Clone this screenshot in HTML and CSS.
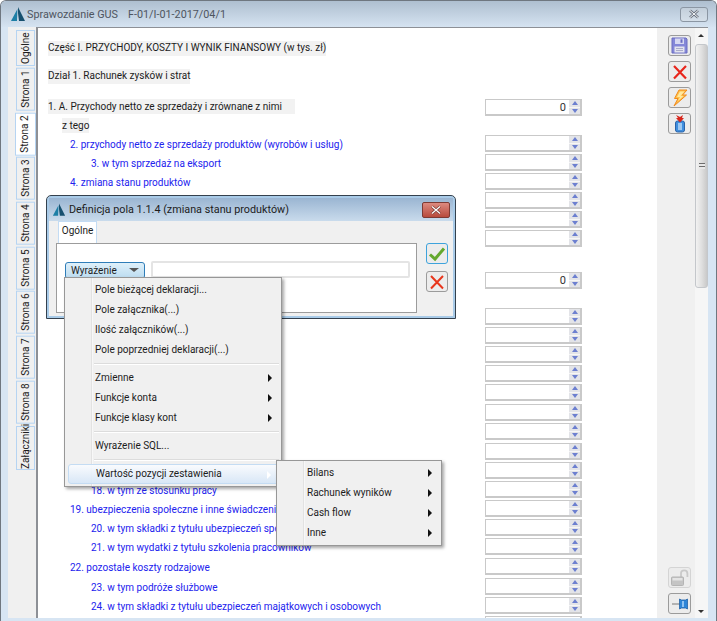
FILE: index.html
```html
<!DOCTYPE html>
<html>
<head>
  <title>Sprawozdanie GUS</title>
  <link rel="stylesheet" href="styles.css">
</head>
<body>
<div class="window">
  <div class="titlebar">
    <svg class="logo" width="16" height="14" viewBox="0 0 16 14"><path d="M8 0 L15 14 L9 14 L8 6 Z" fill="#17506f"/><path d="M7.4 2 L7 14 L1 14 Z" fill="#1d7fa6"/></svg>
    <span class="title">Sprawozdanie GUS</span>
    <span class="title doc">F-01/I-01-2017/04/1</span>
    <button class="close" type="button"><svg width="12" height="10" viewBox="0 0 12 10"><path d="M2 1.5 L10 8.5 M10 1.5 L2 8.5" stroke="#6d7480" stroke-width="2.6"/><path d="M2 1.5 L10 8.5 M10 1.5 L2 8.5" stroke="#f4f6f8" stroke-width="1"/></svg></button>
  </div>
  <div class="content">
    <div class="tabs">
      <div class="tab tab-short">Ogólne</div>
      <div class="tab">Strona 1</div>
      <div class="tab tab-active">Strona 2</div>
      <div class="tab">Strona 3</div>
      <div class="tab">Strona 4</div>
      <div class="tab">Strona 5</div>
      <div class="tab">Strona 6</div>
      <div class="tab">Strona 7</div>
      <div class="tab">Strona 8</div>
      <div class="tab tab-last">Załączniki</div>
    </div>
    <div class="main">
      <div class="head head-first">Część I. PRZYCHODY, KOSZTY I WYNIK FINANSOWY (w tys. zł)</div>
      <div class="head head-second">Dział 1. Rachunek zysków i strat</div>

      <div class="row">
        <span class="label lv0 boxed boxed-wide">1. A. Przychody netto ze sprzedaży i zrównane z nimi</span>
        <div class="num"><span class="val">0</span><span class="spin"><i class="up"></i><i class="down"></i></span></div>
      </div>
      <div class="row-text"><span class="label boxed ztego">z tego</span></div>

      <div class="row"><span class="label lv1">2. przychody netto ze sprzedaży produktów (wyrobów i usług)</span><div class="num"><span class="spin"><i class="up"></i><i class="down"></i></span></div></div>
      <div class="row"><span class="label lv2">3. w tym sprzedaż na eksport</span><div class="num"><span class="spin"><i class="up"></i><i class="down"></i></span></div></div>
      <div class="row"><span class="label lv1">4. zmiana stanu produktów</span><div class="num"><span class="spin"><i class="up"></i><i class="down"></i></span></div></div>
      <div class="row"><span class="label"></span><div class="num"><span class="spin"><i class="up"></i><i class="down"></i></span></div></div>
      <div class="row"><span class="label"></span><div class="num"><span class="spin"><i class="up"></i><i class="down"></i></span></div></div>
      <div class="row gap-a"><span class="label"></span><div class="num"><span class="spin"><i class="up"></i><i class="down"></i></span></div></div>
      <div class="row gap-b"><span class="label"></span><div class="num"><span class="val">0</span><span class="spin"><i class="up"></i><i class="down"></i></span></div></div>

      <div class="row"><span class="label"></span><div class="num"><span class="spin"><i class="up"></i><i class="down"></i></span></div></div>
      <div class="row"><span class="label"></span><div class="num"><span class="spin"><i class="up"></i><i class="down"></i></span></div></div>
      <div class="row"><span class="label"></span><div class="num"><span class="spin"><i class="up"></i><i class="down"></i></span></div></div>
      <div class="row"><span class="label"></span><div class="num"><span class="spin"><i class="up"></i><i class="down"></i></span></div></div>
      <div class="row tall"><span class="label"></span><div class="num"><span class="spin"><i class="up"></i><i class="down"></i></span></div></div>
      <div class="row"><span class="label"></span><div class="num"><span class="spin"><i class="up"></i><i class="down"></i></span></div></div>
      <div class="row tall"><span class="label"></span><div class="num"><span class="spin"><i class="up"></i><i class="down"></i></span></div></div>
      <div class="row"><span class="label"></span><div class="num"><span class="spin"><i class="up"></i><i class="down"></i></span></div></div>
      <div class="row"><span class="label"></span><div class="num"><span class="spin"><i class="up"></i><i class="down"></i></span></div></div>
      <div class="row"><span class="label lv2">18. w tym ze stosunku pracy</span><div class="num"><span class="spin"><i class="up"></i><i class="down"></i></span></div></div>
      <div class="row"><span class="label lv1">19. ubezpieczenia społeczne i inne świadczenia</span><div class="num"><span class="spin"><i class="up"></i><i class="down"></i></span></div></div>
      <div class="row"><span class="label lv2">20. w tym składki z tytułu ubezpieczeń spo</span><div class="num"><span class="spin"><i class="up"></i><i class="down"></i></span></div></div>
      <div class="row tall"><span class="label lv2">21. w tym wydatki z tytułu szkolenia pracowników</span><div class="num"><span class="spin"><i class="up"></i><i class="down"></i></span></div></div>
      <div class="row tall"><span class="label lv1">22. pozostałe koszty rodzajowe</span><div class="num"><span class="spin"><i class="up"></i><i class="down"></i></span></div></div>
      <div class="row"><span class="label lv2">23. w tym podróże służbowe</span><div class="num"><span class="spin"><i class="up"></i><i class="down"></i></span></div></div>
      <div class="row"><span class="label lv2">24. w tym składki z tytułu ubezpieczeń majątkowych i osobowych</span><div class="num"><span class="spin"><i class="up"></i><i class="down"></i></span></div></div>
      <div class="row"><span class="label"></span><div class="num"></div></div>
    </div>
    <div class="side">
      <div class="tools">
        <button class="tool" type="button"><svg width="17" height="17" viewBox="0 0 17 17"><path d="M1 1 H15 L16 2 V16 H1 Z" fill="#8487d8" stroke="#6a6cc0"/><rect x="4" y="1.5" width="9" height="5.5" fill="#d6d8f2"/><rect x="9.5" y="2.3" width="2" height="3.5" fill="#6a6cc0"/><rect x="3.5" y="9.5" width="10" height="6" fill="#e3e4ee"/><path d="M5 11.5 H12 M5 13.5 H12" stroke="#a9abc9"/></svg></button>
        <button class="tool" type="button"><svg width="16" height="16" viewBox="0 0 16 16"><path d="M2 2 L14 14.5 M14 2 L2 14.5" stroke="#e8261c" stroke-width="2.2"/></svg></button>
        <button class="tool" type="button"><svg width="18" height="18" viewBox="0 0 18 18"><path d="M8 1 H16 L11.5 6 H15.5 L3 17 L7 9.5 H3.5 Z" fill="#ffc04a" stroke="#f08a1c"/><path d="M9 2.5 H13.5 L9.5 7 H12.5 L7 12 L9 8 H6 Z" fill="#ffe9a0"/></svg></button>
        <button class="tool" type="button"><svg width="14" height="19" viewBox="0 0 14 19"><rect x="2.5" y="7" width="9" height="11" rx="2" fill="#3f8ede" stroke="#2b63a8"/><rect x="5" y="9" width="4" height="7" fill="#9cc8f2"/><path d="M3 1 L7 3 L10 1 L9 4 H11 L7 8.5 L3 4 H5 Z" fill="#d8261c"/></svg></button>
      </div>
      <div class="tools tools-bottom">
        <button class="tool tool-off" type="button"><svg width="19" height="18" viewBox="0 0 19 18"><path d="M11 8 V4.5 A3.2 3.2 0 0 1 17.4 4.5 V8" fill="none" stroke="#c9c9c9" stroke-width="1.8"/><rect x="1.5" y="8" width="12" height="8.5" rx="1" fill="#c4c4c4" stroke="#b4b4b4"/><rect x="2.5" y="9" width="10" height="2.5" fill="#e4e4e4"/></svg></button>
        <button class="tool" type="button"><svg width="18" height="14" viewBox="0 0 18 14"><path d="M1 7 H9" stroke="#9a9a9a" stroke-width="1.4"/><path d="M8.5 2 L10.5 3 H14.5 L16.5 2 V12 L14.5 11 H10.5 L8.5 12 Z" fill="#2f86d8" stroke="#2263a8" stroke-width="0.8"/><rect x="11" y="4" width="2" height="6" fill="#8fc3f2"/></svg></button>
      </div>
      <div class="scrollbar">
        <i class="sb-up"></i>
        <div class="thumb"><span class="grip"></span></div>
        <i class="sb-down"></i>
      </div>
    </div>
  </div>

  <div class="dialog">
    <div class="dlg-title">
      <svg class="dlg-logo" width="14" height="13" viewBox="0 0 16 14"><path d="M8 0 L15 14 L9 14 L8 6 Z" fill="#17506f"/><path d="M7.4 2 L7 14 L1 14 Z" fill="#1d7fa6"/></svg>
      <span class="dlg-name">Definicja pola 1.1.4 (zmiana stanu produktów)</span>
      <button class="dlg-close" type="button"><svg width="12" height="10" viewBox="0 0 12 10"><path d="M2 1.5 L10 8.5 M10 1.5 L2 8.5" stroke="#7a3a34" stroke-width="2.6"/><path d="M2 1.5 L10 8.5 M10 1.5 L2 8.5" stroke="#fff" stroke-width="1.2"/></svg></button>
    </div>
    <div class="dlg-body">
      <div class="dlg-left">
        <div class="dlg-tab">Ogólne</div>
        <div class="dlg-panel">
          <div class="combo">Wyrażenie<i class="combo-arrow"></i></div>
          <div class="dlg-input"></div>
        </div>
      </div>
      <div class="dlg-actions">
        <button class="dlg-btn dlg-ok" type="button"><svg width="18" height="16" viewBox="0 0 18 16"><path d="M2 8.5 L7 13 L16 2.5" fill="none" stroke="#64a82e" stroke-width="3"/></svg></button>
        <button class="dlg-btn" type="button"><svg width="16" height="16" viewBox="0 0 16 16"><path d="M2 2 L14 14.5 M14 2 L2 14.5" stroke="#e8361c" stroke-width="2"/></svg></button>
      </div>
    </div>
  </div>

  <div class="menu menu-main">
    <div class="mi">Pole bieżącej deklaracji...</div>
    <div class="mi">Pole załącznika(...)</div>
    <div class="mi">Ilość załączników(...)</div>
    <div class="mi">Pole poprzedniej deklaracji(...)</div>
    <div class="msep"></div>
    <div class="mi more">Zmienne</div>
    <div class="mi more">Funkcje konta</div>
    <div class="mi more">Funkcje klasy kont</div>
    <div class="msep"></div>
    <div class="mi">Wyrażenie SQL...</div>
    <div class="msep"></div>
    <div class="mi more hot">Wartość pozycji zestawienia</div>
  </div>
  <div class="menu menu-sub">
    <div class="mi more">Bilans</div>
    <div class="mi more">Rachunek wyników</div>
    <div class="mi more">Cash flow</div>
    <div class="mi more">Inne</div>
  </div>
</div>
</body>
</html>
```

FILE: styles.css
```css
html, body {
  margin: 0;
  height: 100%;
  overflow: hidden;
  background: #fff;
}
body {
  font-family: Roboto, "Noto Sans", sans-serif;
  font-size: 10px;
  color: #1c1c1c;
}
button {
  padding: 0;
  font: inherit;
}

/* outer window */
.window {
  position: relative;
  width: 717px;
  height: 621px;
  box-sizing: border-box;
  display: flex;
  flex-direction: column;
  border: 1px solid #6f7780;
  border-bottom: 0;
  border-radius: 6px 6px 0 0;
  background: #d7e5f3;
  overflow: hidden;
}
.titlebar {
  height: 26px;
  flex: none;
  display: flex;
  align-items: center;
  padding: 0 8px 0 8px;
  background: linear-gradient(#aebfd0, #d5e3f1);
  box-sizing: border-box;
}
.logo {
  margin: 0 1px 0 1px;
}
.title {
  font-size: 10.8px;
  color: #4e5560;
}
.doc {
  margin-left: 10px;
}
.close {
  margin-left: auto;
  width: 28px;
  height: 15px;
  display: flex;
  align-items: center;
  justify-content: center;
  border: 1px solid #8b96a3;
  border-radius: 3px;
  background: linear-gradient(#c3cfdb, #d5dfe9);
}
.content {
  flex: 1;
  min-height: 0;
  display: flex;
  margin: 0 8px 3px 7px;
  background: #f0f0f0;
}

/* page tabs on the left */
.tabs {
  width: 28px;
  flex: none;
  box-sizing: border-box;
  padding: 3px 0 0 8px;
  display: flex;
  flex-direction: column;
  gap: 2px;
}
.tab {
  width: 19px;
  height: 42.7px;
  flex: none;
  box-sizing: border-box;
  writing-mode: vertical-rl;
  transform: rotate(180deg);
  text-align: center;
  line-height: 17px;
  border: 1px solid #b6d4f2;
  background: #f0f0f0;
  color: #1c1c1c;
  white-space: nowrap;
}
.tab-short {
  height: 36px;
}
.tab-active {
  width: 21px;
  margin-left: -1px;
  background: #fff;
}
.tab-last {
  height: 44px;
}

/* main scrolling sheet */
.main {
  flex: 1;
  min-width: 0;
  background: #fff;
  border-left: 2px solid #8d9096;
  border-top: 1px solid #8d9096;
  padding-top: 13px;
  overflow: hidden;
  color: #2222ee;
}
.head {
  width: max-content;
  margin-left: 10px;
  height: 15px;
  line-height: 14px;
  background: #f2f2f2;
  color: #1c1c1c;
}
.head-first {
  margin-bottom: 13px;
}
.head-second {
  margin-bottom: 15px;
}
.row {
  height: 19px;
  display: flex;
  flex: none;
}
.tall {
  height: 20px;
}
.gap-a {
  margin-bottom: 23px;
}
.gap-b {
  margin-bottom: 17px;
}
.row-text {
  height: 17px;
}
.label {
  width: 447px;
  flex: none;
  box-sizing: border-box;
  padding-top: 2px;
  line-height: 16px;
  white-space: nowrap;
}
.lv0 {
  margin-left: 10px;
  width: 247px;
}
.lv1 {
  padding-left: 32px;
}
.lv2 {
  padding-left: 53px;
}
.boxed {
  background: #f2f2f2;
  color: #1c1c1c;
  height: 15px;
  padding-top: 0;
}
.boxed-wide {
  margin-right: 190px;
}
.ztego {
  display: block;
  width: 27px;
  margin-left: 24px;
}
.num {
  width: 97px;
  height: 17px;
  flex: none;
  box-sizing: border-box;
  border: 2px solid #c9c9c9;
  border-width: 1px 2px 2px 1px;
  display: flex;
  justify-content: flex-end;
  align-items: center;
  background: #fff;
  font-size: 11px;
  color: #333;
}
.val {
  margin-right: 3px;
}
.spin {
  width: 11px;
  height: 14px;
  display: flex;
  flex-direction: column;
  flex: none;
  background: #e3e4e8;
}
.spin i {
  flex: 1;
  display: flex;
  align-items: center;
  justify-content: center;
}
.spin i::after {
  content: "";
  border-left: 3px solid transparent;
  border-right: 3px solid transparent;
}
.up::after {
  border-bottom: 4px solid #6c7fd0;
}
.down {
  border-top: 1px solid #f6f6f6;
}
.down::after {
  border-top: 4px solid #6c7fd0;
}

/* right side toolbar and scrollbar */
.side {
  width: 51px;
  flex: none;
  position: relative;
  box-sizing: border-box;
  border-top: 1px solid #8d9096;
  padding: 7px 0 4px 11px;
  display: flex;
  flex-direction: column;
  justify-content: space-between;
}
.tools {
  display: flex;
  flex-direction: column;
  gap: 5px;
  width: 23px;
}
.tools-bottom {
  gap: 5px;
}
.tool {
  width: 23px;
  height: 21px;
  box-sizing: border-box;
  border: 1.5px solid #9b9b9b;
  border-radius: 3px;
  background: #ececec;
  display: flex;
  align-items: center;
  justify-content: center;
}
.tool-off {
  border-color: #d4d4d4;
}
.scrollbar {
  position: absolute;
  top: 0;
  right: 0;
  bottom: 0;
  width: 13px;
  background: #f6f6f6;
}
.sb-up,
.sb-down {
  position: absolute;
  left: 3px;
  border-left: 3px solid transparent;
  border-right: 3px solid transparent;
}
.sb-up {
  top: 6px;
  border-bottom: 3px solid #333;
}
.sb-down {
  bottom: 5px;
  border-top: 3px solid #333;
}
.thumb {
  position: absolute;
  top: 16px;
  left: 0;
  width: 13px;
  height: 244px;
  box-sizing: border-box;
  border: 1px solid #c4c7cb;
  border-radius: 3px;
  background: linear-gradient(90deg, #f2f2f2, #e0e0e0 50%, #c9c9c9);
  display: flex;
  align-items: center;
  justify-content: center;
}
.grip {
  width: 6px;
  height: 6px;
  background: repeating-linear-gradient(#6d6d6d 0 1px, #e8e8e8 1px 3px);
}

/* dialog over the sheet */
.dialog {
  position: absolute;
  left: 45px;
  top: 194px;
  width: 410px;
  height: 124px;
  box-sizing: border-box;
  border: 1px solid #34414e;
  border-radius: 5px 5px 0 0;
  background: #f0f0f0;
  box-shadow: inset 0 0 0 2px #a9cbe8;
}
.dlg-title {
  height: 23px;
  box-sizing: border-box;
  margin: 2px 2px 0;
  padding: 0 3px 0 2px;
  display: flex;
  align-items: center;
  background: linear-gradient(#9ab5d2, #c9dbec);
}
.dlg-logo {
  margin-right: 3px;
  margin-left: 1px;
}
.dlg-name {
  font-size: 10.8px;
  color: #1c1c1c;
}
.dlg-close {
  margin-left: auto;
  width: 28px;
  height: 16px;
  display: flex;
  align-items: center;
  justify-content: center;
  border: 1px solid #7d3a34;
  border-radius: 2px;
  background: linear-gradient(#dd8a80, #b84a3c);
}
.dlg-body {
  display: flex;
  padding: 0 0 0 9px;
}
.dlg-left {
  width: 361px;
}
.dlg-tab {
  width: 39px;
  height: 22px;
  margin-left: 2px;
  box-sizing: border-box;
  border: 1px solid #c3dcf4;
  border-bottom: 0;
  background: #fff;
  text-align: center;
  line-height: 17px;
}
.dlg-panel {
  height: 70px;
  box-sizing: border-box;
  border: 1px solid #9c9c9c;
  background: #fff;
  padding: 17px 6px 0 8px;
  display: flex;
  align-items: flex-start;
  gap: 6px;
}
.combo {
  width: 80px;
  height: 17px;
  flex: none;
  box-sizing: border-box;
  margin-top: 1px;
  padding-left: 5px;
  line-height: 16px;
  border: 1px solid #2f7db8;
  border-radius: 3px;
  background: linear-gradient(#dff0fa, #bcdcf0);
  position: relative;
}
.combo-arrow {
  position: absolute;
  right: 5px;
  top: 5px;
  border-left: 5px solid transparent;
  border-right: 5px solid transparent;
  border-top: 4px solid #555;
}
.dlg-input {
  flex: 1;
  height: 17px;
  box-sizing: border-box;
  border: 2px solid #e4e4e4;
  border-radius: 2px;
  background: #fff;
}
.dlg-actions {
  margin-left: 9px;
  padding-top: 22px;
  display: flex;
  flex-direction: column;
  gap: 7px;
}
.dlg-btn {
  width: 22px;
  height: 21px;
  box-sizing: border-box;
  border: 1.5px solid #9b9b9b;
  border-radius: 3px;
  background: #ececec;
  display: flex;
  align-items: center;
  justify-content: center;
}
.dlg-ok {
  border-color: #3ea3dc;
}

/* context menus */
.menu {
  position: absolute;
  box-sizing: border-box;
  padding: 2px;
  border: 1px solid #979797;
  background: linear-gradient(90deg, #f0f0f0 26px, #e2e2e2 26px, #e2e2e2 27px, #fff 27px, #f0f0f0 28px);
  box-shadow: 2px 2px 3px rgba(0, 0, 0, 0.35);
  color: #1c1c1c;
}
.menu-main {
  left: 63px;
  top: 276px;
  width: 218px;
}
.menu-sub {
  left: 275px;
  top: 459px;
  width: 166px;
}
.mi {
  position: relative;
  height: 20px;
  line-height: 20px;
  padding-left: 28px;
  white-space: nowrap;
}
.more::after {
  content: "";
  position: absolute;
  right: 7px;
  top: 6px;
  border-top: 4px solid transparent;
  border-bottom: 4px solid transparent;
  border-left: 4px solid #111;
}
.hot {
  box-sizing: border-box;
  margin: 0 0 0 1px;
  padding-left: 27px;
  border: 1px solid #c4dcf3;
  border-radius: 3px;
  line-height: 18px;
  background: linear-gradient(rgba(250, 252, 255, 0.9), rgba(214, 230, 247, 0.9));
}
.hot::after {
  border-left-color: #fff;
}
.msep {
  height: 8px;
  margin-left: 27px;
  background: linear-gradient(#f0f0f0 3px, #dcdcdc 3px, #dcdcdc 4px, #fff 4px, #fff 5px, #f0f0f0 5px);
}
```
